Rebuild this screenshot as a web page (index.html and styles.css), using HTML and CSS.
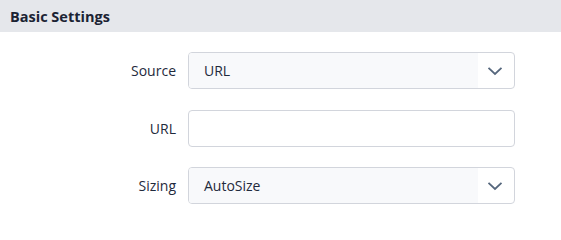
FILE: index.html
```html
<!DOCTYPE html>
<html>
<head>
<meta charset="utf-8">
<link rel="stylesheet" href="styles.css">
</head>
<body>
<div class="section-header">Basic Settings</div>
<div class="form">
  <div class="row">
    <label class="label">Source</label>
    <div class="select">
      <span class="select-value">URL</span>
      <span class="select-arrow">
        <svg width="16" height="10" viewBox="0 0 16 10"><path d="M1.5 1.8 L8 8 L14.5 1.8" fill="none" stroke="#56677d" stroke-width="1.8"/></svg>
      </span>
    </div>
  </div>
  <div class="row">
    <label class="label">URL</label>
    <div class="input"></div>
  </div>
  <div class="row">
    <label class="label">Sizing</label>
    <div class="select">
      <span class="select-value">AutoSize</span>
      <span class="select-arrow">
        <svg width="16" height="10" viewBox="0 0 16 10"><path d="M1.5 1.8 L8 8 L14.5 1.8" fill="none" stroke="#56677d" stroke-width="1.8"/></svg>
      </span>
    </div>
  </div>
</div>
</body>
</html>
```
FILE: styles.css
```css
html, body {
  margin: 0;
  padding: 0;
  background: #ffffff;
  font-family: "Open Sans", "Noto Sans", sans-serif;
  color: #1f2a3c;
}
.section-header {
  height: 32px;
  box-sizing: border-box;
  background: #e5e7eb;
  padding-left: 10px;
  display: flex;
  align-items: center;
  font-weight: 700;
  font-size: 14.5px;
  color: #1b2333;
}
.form {
  padding-top: 20px;
  display: flex;
  flex-direction: column;
  gap: 20.5px;
}
.row {
  display: flex;
  align-items: center;
  gap: 12px;
}
.label {
  width: 176px;
  text-align: right;
  font-size: 14px;
  color: #1f2a3c;
}
.select, .input {
  width: 327px;
  height: 37px;
  box-sizing: border-box;
  border: 1px solid #d2d5dc;
  border-radius: 4px;
  background: #ffffff;
}
.select {
  display: flex;
  overflow: hidden;
}
.select-value {
  flex: 1;
  background: #f8f9fb;
  padding-left: 15px;
  display: flex;
  align-items: center;
  font-size: 14px;
  color: #1f2a3c;
}
.select-arrow {
  width: 34px;
  display: flex;
  align-items: center;
  justify-content: center;
  padding-right: 2px;
}
```
